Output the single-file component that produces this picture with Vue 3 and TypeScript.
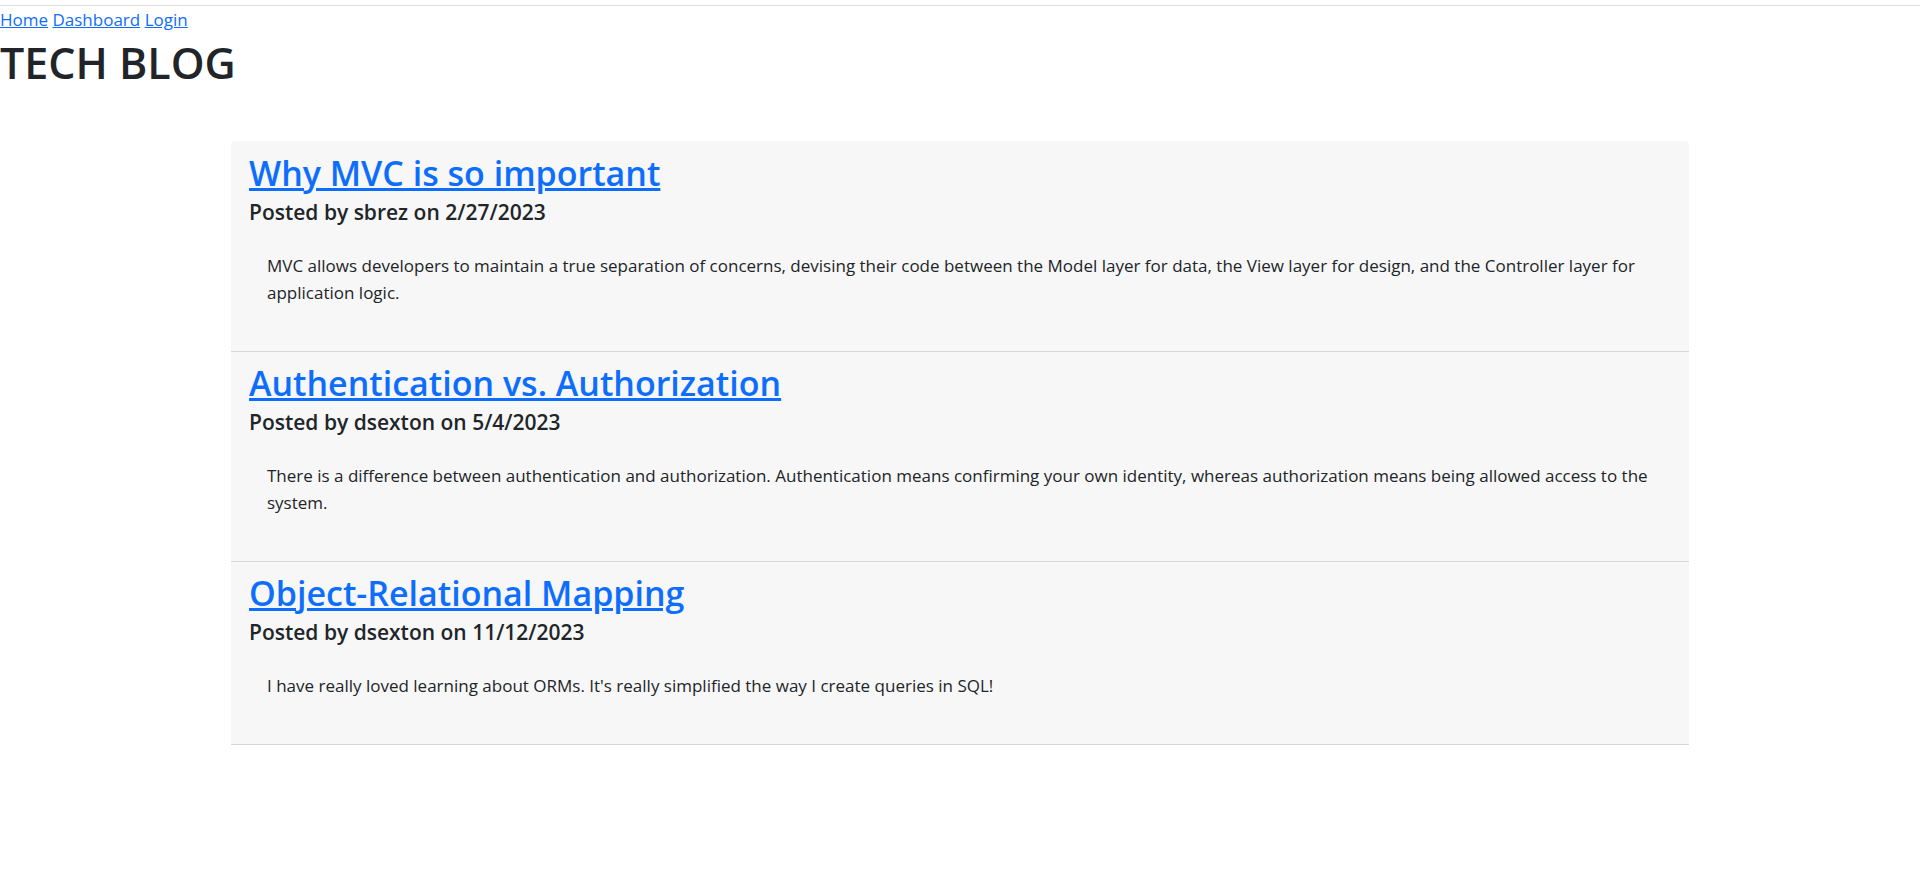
<script setup lang="ts">
interface Post {
  id: number
  title: string
  author: string
  date: string
  body: string
}

const links: string[] = ['Home', 'Dashboard', 'Login']

const posts: Post[] = [
  {
    id: 1,
    title: 'Why MVC is so important',
    author: 'sbrez',
    date: '2/27/2023',
    body: 'MVC allows developers to maintain a true separation of concerns, devising their code between the Model layer for data, the View layer for design, and the Controller layer for application logic.',
  },
  {
    id: 2,
    title: 'Authentication vs. Authorization',
    author: 'dsexton',
    date: '5/4/2023',
    body: 'There is a difference between authentication and authorization. Authentication means confirming your own identity, whereas authorization means being allowed access to the system.',
  },
  {
    id: 3,
    title: 'Object-Relational Mapping',
    author: 'dsexton',
    date: '11/12/2023',
    body: "I have really loved learning about ORMs. It's really simplified the way I create queries in SQL!",
  },
]
</script>

<template>
  <div class="page">
    <header class="site-header">
      <nav aria-label="Main">
        <template v-for="link in links" :key="link"><a :href="'#' + link.toLowerCase()">{{ link }}</a>{{ ' ' }}</template>
      </nav>
      <h1>TECH BLOG</h1>
    </header>
    <main class="posts">
      <article v-for="post in posts" :key="post.id" class="post">
        <h2><a :href="'#post-' + post.id">{{ post.title }}</a></h2>
        <h3>Posted by {{ post.author }} on {{ post.date }}</h3>
        <p>{{ post.body }}</p>
      </article>
    </main>
  </div>
</template>

<style>
body {
  margin: 0;
  background: #fff;
}
</style>

<style scoped>
.page {
  padding-top: 5px;
  font-family: 'Segoe UI', 'Open Sans', 'Noto Sans', sans-serif;
  font-size: 17px;
  line-height: 27px;
  color: #212529;
}
a {
  color: #0d6efd;
  text-decoration: underline;
}
h1,
h2,
h3,
p {
  margin: 0;
}
h1,
h2,
h3 {
  font-weight: 600;
}
.site-header {
  border-top: 1px solid #dedede;
}
h1 {
  padding-top: 3px;
  font-size: 43px;
  line-height: 54px;
}
.posts {
  max-width: 1458px;
  margin: 51px auto 0;
  padding-top: 1px;
  border-radius: 4px 4px 0 0;
  background: #f7f7f7;
}
.post {
  padding: 7px 18px 45px;
  border-bottom: 1px solid #d8d8d8;
}
h2 {
  font-size: 34px;
  line-height: 49px;
}
h2 a {
  text-decoration-thickness: 3px;
}
h3 {
  font-size: 21px;
  line-height: 29px;
}
.post p {
  padding: 25px 18px 0;
}
</style>
